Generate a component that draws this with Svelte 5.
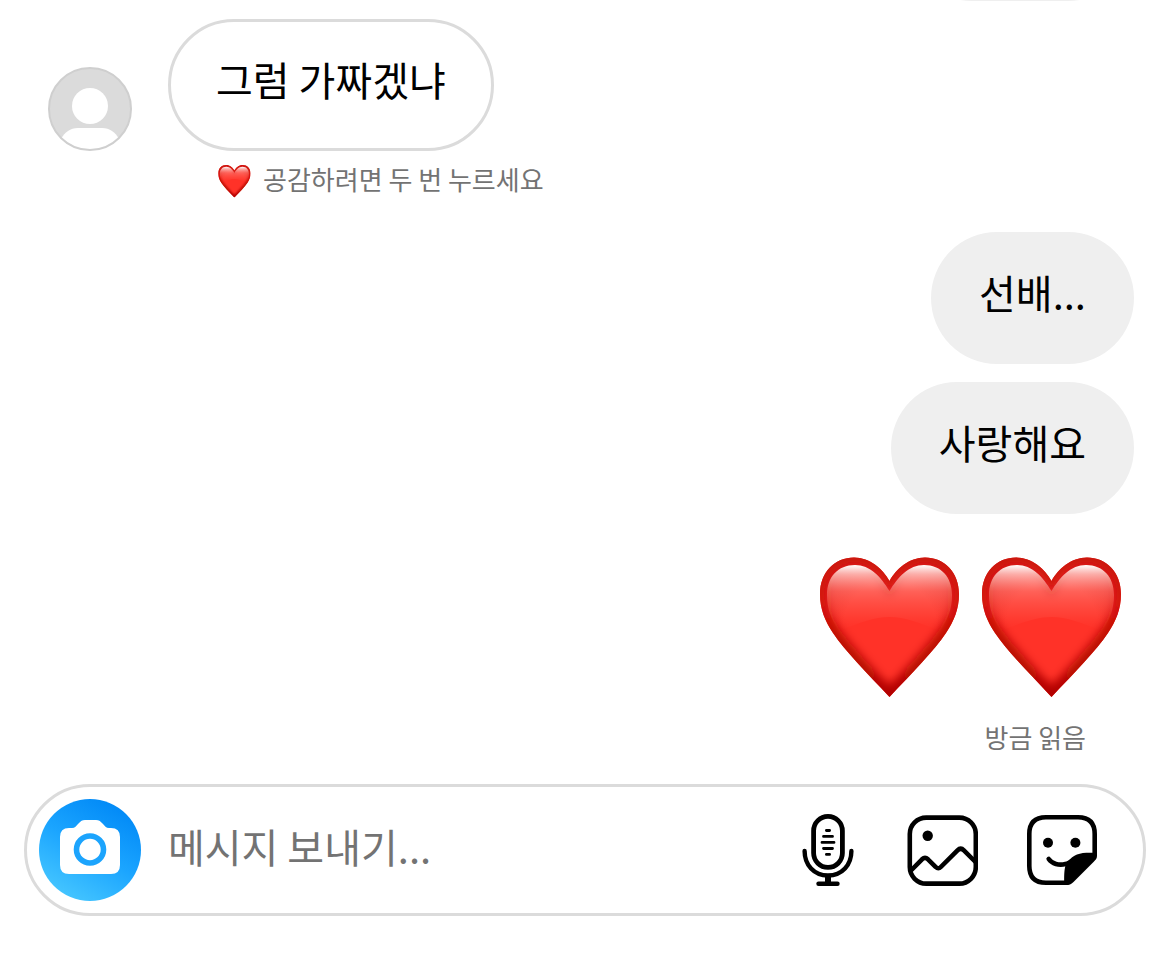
<script>
  const sent = ['선배...', '사랑해요'];
  const hearts = [1, 2];

  let draft = $state('');
</script>

{#snippet heart(id)}
  <svg class="heart" viewBox="0 0 142 142" role="img" aria-label="하트">
    <defs>
      <radialGradient id="{id}-base" cx="0.5" cy="0.5" r="0.6">
        <stop offset="0" stop-color="#ff3228" />
        <stop offset="0.55" stop-color="#ff3228" />
        <stop offset="1" stop-color="#e0160f" />
      </radialGradient>
      <linearGradient id="{id}-rim" x1="0" y1="0" x2="0" y2="1">
        <stop offset="0" stop-color="#c9120a" />
        <stop offset="0.35" stop-color="#d3120a" />
        <stop offset="0.6" stop-color="#b80800" />
        <stop offset="1" stop-color="#b00600" />
      </linearGradient>
      <linearGradient id="{id}-gloss" x1="0" y1="0" x2="0" y2="1">
        <stop offset="0" stop-color="#fff" />
        <stop offset="0.14" stop-color="#ffd0cc" stop-opacity="0.8" />
        <stop offset="0.4" stop-color="#ff9088" stop-opacity="0.5" />
        <stop offset="0.75" stop-color="#ff6a5e" stop-opacity="0.25" />
        <stop offset="1" stop-color="#ff4a40" stop-opacity="0" />
      </linearGradient>
      <filter id="{id}-soft" x="-10%" y="-10%" width="120%" height="120%">
        <feGaussianBlur stdDeviation="5" />
      </filter>
      <clipPath id="{id}-clip">
        <path d="M70.5 24C64 12 51 .5 35 .5C16 .5 1 15 1 37C1 52 6 64 14 76C26 94 48 116 70.5 140C93 116 115 94 127 76C135 64 140 52 140 37C140 15 125 .5 106 .5C90 .5 77 12 70.5 24Z" />
      </clipPath>
    </defs>
    <g clip-path="url(#{id}-clip)">
      <rect width="142" height="142" fill="url(#{id}-base)" />
      <path
        d="M70.5 24C64 12 51 .5 35 .5C16 .5 1 15 1 37C1 52 6 64 14 76C26 94 48 116 70.5 140C93 116 115 94 127 76C135 64 140 52 140 37C140 15 125 .5 106 .5C90 .5 77 12 70.5 24Z"
        fill="none"
        stroke="url(#{id}-rim)"
        stroke-width="15"
        filter="url(#{id}-soft)"
      />
      <path
        d="M70.5 34C62 20 51 8 36 8C19 8 8 20 8 38C8 52 12 62 20 74C40 66 55 60 70.5 60C86 60 101 66 121 74C129 62 133 52 133 38C133 20 122 8 105 8C90 8 79 20 70.5 34Z"
        fill="url(#{id}-gloss)"
      />
    </g>
  </svg>
{/snippet}

<main class="chat">
  <div class="previous" aria-hidden="true">
    <div class="bubble sent earlier"></div>
  </div>

  <section class="received">
    <svg class="avatar" viewBox="0 0 84 84" role="img" aria-label="프로필">
      <defs>
        <clipPath id="avatar-clip"><circle cx="42" cy="42" r="41" /></clipPath>
      </defs>
      <circle cx="42" cy="42" r="41" fill="#dbdbdb" />
      <g clip-path="url(#avatar-clip)" fill="#fff">
        <circle cx="42" cy="39" r="18" />
        <path d="M13 72C17 65 22 61 30 61H54C62 61 67 65 71 72V84H13Z" />
      </g>
      <circle cx="42" cy="42" r="41" fill="none" stroke="#cfcfcf" stroke-width="2" />
    </svg>
    <p class="bubble outlined">그럼 가짜겠냐</p>
    <p class="hint">{@render heart('hint')}<span>공감하려면 두 번 누르세요</span></p>
  </section>

  <section class="outgoing">
    {#each sent as text}
      <p class="bubble sent">{text}</p>
    {/each}
    <div class="big-hearts">
      {#each hearts as n}
        {@render heart(`big${n}`)}
      {/each}
    </div>
    <p class="status">방금 읽음</p>
  </section>

  <form class="composer" onsubmit={(e) => e.preventDefault()}>
    <button class="camera" type="button" aria-label="카메라">
      <svg viewBox="0 0 102 102">
        <path
          d="M30 29H33C36 29 37 27 40 24C42 22 43 21 46 21H57C60 21 61 22 63 24C66 27 67 29 70 29H72Q81 29 81 38V66Q81 75 72 75H30Q21 75 21 66V38Q21 29 30 29Z"
          fill="#fff"
        />
        <circle cx="51" cy="50.5" r="13.5" fill="none" stroke="#1ca4fd" stroke-width="5.6" />
      </svg>
    </button>
    <input type="text" aria-label="메시지" placeholder="메시지 보내기..." bind:value={draft} />
    <div class="actions">
      <button class="mic" type="button" aria-label="음성 메시지">
        <svg viewBox="0 0 60 72" fill="none" stroke="#000" stroke-linecap="round">
          <rect x="15.6" y="2.4" width="28.8" height="51" rx="14.4" stroke-width="4.8" />
          <path d="M6.6 37C6.6 51 16 61.5 30 61.5S53.4 51 53.4 37" stroke-width="4.4" />
          <path d="M30 62V69" stroke-width="6" stroke-linecap="butt" />
          <path d="M20.5 69.8H39.5" stroke-width="4.4" />
          <path d="M28.4 16.5H31.6M25.5 22.4H34.5M24 28.4H36M25.5 34.5H34.5M28.4 40.4H31.6" stroke-width="2.8" />
        </svg>
      </button>
      <button type="button" aria-label="사진">
        <svg viewBox="0 0 72 72" fill="none" stroke="#000">
          <rect x="3.8" y="3.6" width="66" height="66" rx="16.5" stroke-width="4.6" />
          <circle cx="21.7" cy="21.7" r="5.2" fill="#000" stroke="none" />
          <path d="M4.5 57L16 45.3Q19 42.6 22 45.3L29.8 53Q32.3 55.6 34.8 53L51.5 36.3Q54.7 33.2 57.9 36.3L69.5 48" stroke-width="4.6" />
        </svg>
      </button>
      <button type="button" aria-label="스티커">
        <svg viewBox="0 0 72 72" fill="none" stroke="#000">
          <path
            d="M40 68.8H20Q3.3 68.8 3.3 52V20Q3.3 3.2 20 3.2H52Q68.7 3.2 68.7 20V41"
            stroke-width="4.6"
          />
          <path
            d="M38.3 71C38 62 38.2 57 39.3 52L38.5 48.3C44 46.5 45 43 51 40.5C56 38.3 62 38.6 71 38.7V42C71 44.5 69.5 46 68 47.5L47.5 68C45 70.5 43 71 40.5 71Z"
            fill="#000"
            stroke="none"
          />
          <path d="M22.7 45C26 49.8 33 51.8 39.5 50" stroke-width="4.6" stroke-linecap="round" />
          <circle cx="22" cy="28.8" r="5" fill="#000" stroke="none" />
          <circle cx="49.4" cy="28.8" r="5" fill="#000" stroke="none" />
        </svg>
      </button>
    </div>
  </form>
</main>

<style>
  :global(body) {
    margin: 0;
    background: #fff;
  }

  .chat {
    display: flex;
    flex-direction: column;
    font-family: 'Noto Sans CJK KR', sans-serif;
    color: #000;
  }

  p {
    margin: 0;
  }

  svg {
    display: block;
  }

  .bubble {
    box-sizing: border-box;
    height: 132px;
    padding: 30px 48px 0;
    border-radius: 66px;
    font-size: 40px;
    line-height: 60px;
  }

  .sent {
    background: #efefef;
  }

  /* only the lower edge of the earlier message is still on screen */
  .previous {
    display: flex;
    justify-content: flex-end;
    align-items: flex-end;
    height: 1px;
    padding-right: 36px;
    overflow: hidden;
  }

  .earlier {
    flex-shrink: 0;
    width: 228px;
  }

  /* Received */
  .received {
    display: grid;
    grid-template-columns: 84px auto;
    column-gap: 36px;
    row-gap: 12px;
    align-items: end;
    justify-content: start;
    padding: 18px 48px 0;
  }

  .avatar {
    width: 84px;
    height: 84px;
  }

  .outlined {
    justify-self: start;
    padding: 27px 45px 0;
    border: 3px solid #dbdbdb;
  }

  .hint {
    grid-column: 2;
    display: flex;
    align-items: center;
    gap: 12px;
    height: 36px;
    padding-left: 50px;
  }

  .hint span {
    padding-bottom: 4px;
  }

  .hint,
  .status {
    font-size: 26px;
    line-height: 36px;
    color: #737373;
  }

  .hint .heart {
    width: 33px;
    height: 33px;
  }

  /* Sent */
  .outgoing {
    display: flex;
    flex-direction: column;
    align-items: flex-end;
    gap: 18px;
    padding: 33px 36px 0;
  }

  .big-hearts {
    display: flex;
    gap: 20px;
    padding: 25px 11px 0 0;
  }

  .big-hearts .heart {
    width: 142px;
    height: 142px;
  }

  .status {
    padding: 2px 48px 0 0;
  }

  /* Composer */
  .composer {
    display: flex;
    align-items: center;
    box-sizing: border-box;
    height: 132px;
    margin: 29px 24px 57px;
    padding: 0 45px 0 12px;
    border: 3px solid #dbdbdb;
    border-radius: 66px;
  }

  button {
    flex-shrink: 0;
    width: 72px;
    height: 72px;
    padding: 0;
    border: 0;
    background: none;
    cursor: pointer;
  }

  .camera {
    width: 102px;
    height: 102px;
    border-radius: 50%;
    background: linear-gradient(30deg, #4ccbff 5%, #1ba5ff 50%, #0088f6 90%);
  }

  input {
    flex: 1;
    min-width: 0;
    height: 66px;
    margin-left: 27px;
    padding: 0 0 8px;
    border: 0;
    outline: none;
    background: none;
    font-family: inherit;
    font-size: 40px;
    color: #000;
  }

  input::placeholder {
    color: #737373;
    opacity: 1;
  }

  .actions {
    display: flex;
    gap: 48px;
  }

  .mic {
    width: 60px;
  }
</style>
